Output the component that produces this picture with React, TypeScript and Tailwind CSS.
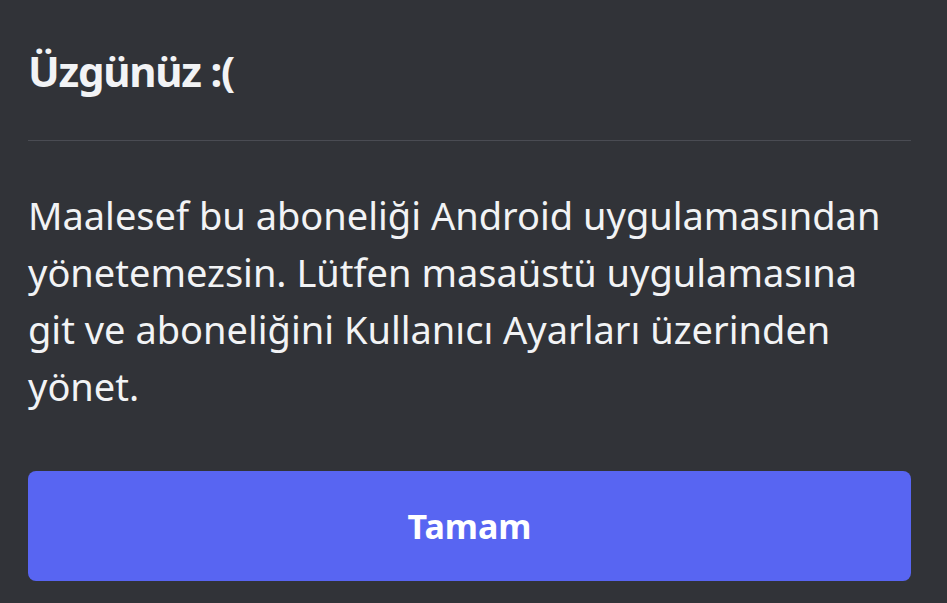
import React from "react";

const App = () => {
  return (
    <div
      className="w-[947px] h-[603px] bg-[#313338] pl-[28px] pr-[36px] flex flex-col"
      style={{ fontFamily: '"Noto Sans", sans-serif' }}
    >
      {/* Header */}
      <div className="pt-[47px] pb-[45px] border-b border-[#4a4c53]">
        <h1 className="text-[42px] leading-[48px] font-bold tracking-[-0.03em] text-[#f2f3f5]">
          Üzgünüz :(
        </h1>
      </div>

      {/* Body */}
      <p className="mt-[46px] text-[38px] leading-[57px] text-[#f2f3f5]">
        Maalesef bu aboneliği Android uygulamasından yönetemezsin. Lütfen
        masaüstü uygulamasına git ve aboneliğini Kullanıcı Ayarları üzerinden
        yönet.
      </p>

      {/* Action */}
      <button className="mt-[56px] h-[110px] w-full rounded-[8px] bg-[#5865f2] text-white text-[34px] font-bold">
        Tamam
      </button>
    </div>
  );
};

export default App;
